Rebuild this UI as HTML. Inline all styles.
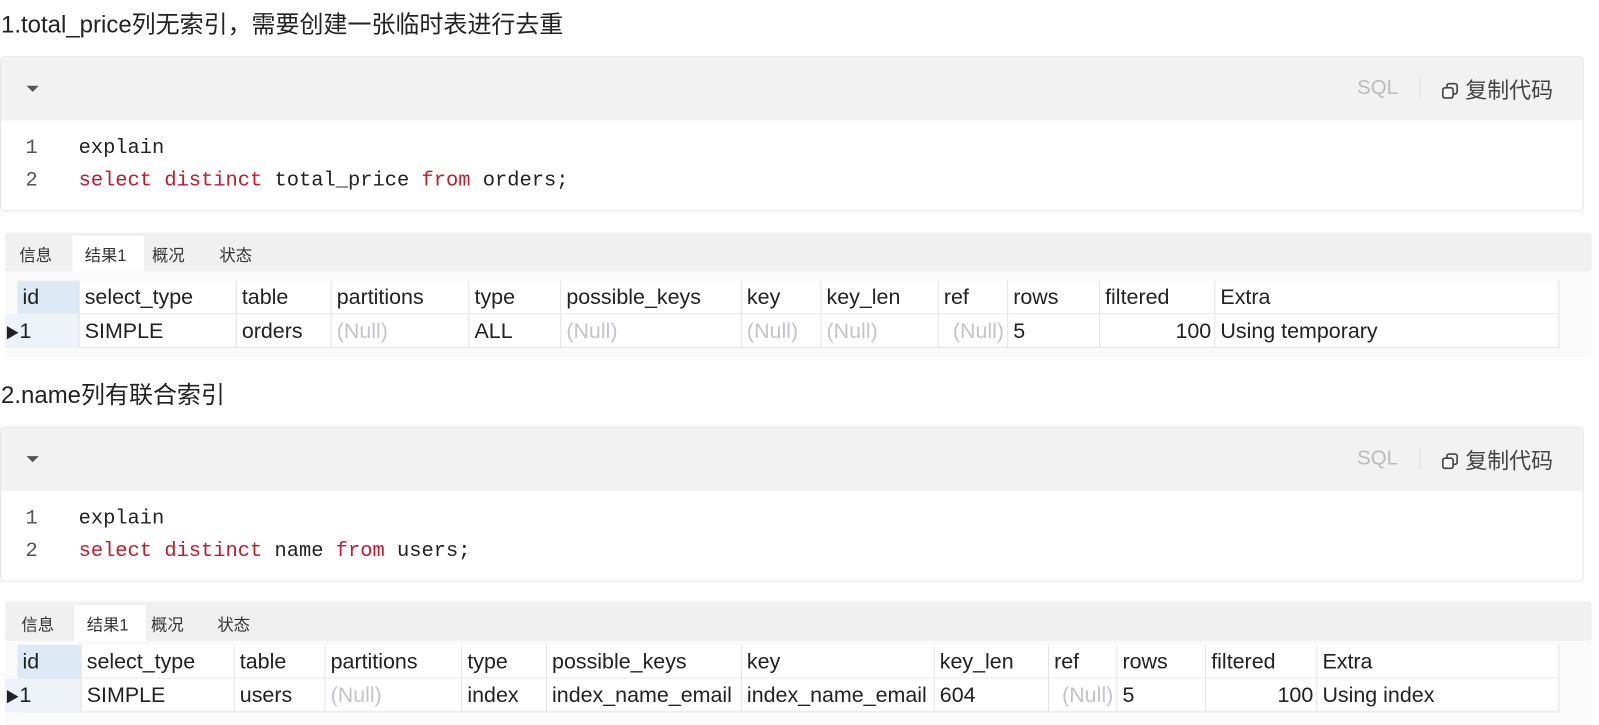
<!DOCTYPE html>
<html><head><meta charset="utf-8"><style>
*{margin:0;padding:0;box-sizing:border-box}
html{width:1599px;height:725px;overflow:hidden}
body{width:1599px;height:725px;background:#fff;position:relative;overflow:hidden;font-family:"Liberation Sans","Noto Sans CJK SC",sans-serif;color:#222}
#w{position:absolute;left:0;top:0;width:1567px;height:711px;transform:scale(1.0204);transform-origin:0 0}
.a{position:absolute}
.h{font-size:23.5px;color:#222;white-space:nowrap}
.cb{position:absolute;left:0;width:1552px;height:152px;border:1px solid #e6e6e6;border-radius:4px;background:#fff;overflow:hidden}
.cbh{height:62px;background:#f2f2f2;position:relative}
.tri{position:absolute;left:25px;top:28px;width:0;height:0;border-left:6px solid transparent;border-right:6px solid transparent;border-top:6px solid #555}
.sql{position:absolute;left:1329px;top:19px;font-size:20px;color:#bbb}
.sep{position:absolute;left:1390px;top:20px;width:1px;height:22px;background:#e0e0e0}
.cp{position:absolute;left:1411px;top:16px;font-size:21.5px;color:#444;white-space:nowrap}
.code{font-family:"Liberation Mono",monospace;font-size:20px;line-height:32px;position:absolute;left:24px;top:74px;white-space:pre;color:#222}
.code .n{color:#555;display:inline-block;width:52px}
.k{color:#c41a2a}
.res{position:absolute;left:5px;width:1555px;height:122px;background:#fafafa;overflow:hidden}
.tabs{position:absolute;left:0;top:0;width:1555px;height:38px;background:#f0f0f0;border-radius:3px}
.tab{position:absolute;top:9px;font-size:16px;color:#333}
.tabon{position:absolute;top:3px;height:35px;background:#fff}
.row{position:absolute;left:17px;height:33px;width:1511px;background:#fff;border-bottom:1px solid #e6e6e6}
.c{position:absolute;top:0;height:33px;line-height:33px;font-size:21px;padding-left:5px;border-right:1px solid #e3e3e3;white-space:nowrap;color:#222;overflow:hidden}
.nl{color:#c3c3cc}
</style></head><body><div id="w">

<div class="a h" style="left:1px;top:5px">1.total_price列无索引，需要创建一张临时表进行去重</div>
<div class="cb" style="top:55px">
 <div class="cbh"><div class="tri"></div><div class="sql">SQL</div><div class="sep"></div>
 <div class="cp"><svg width="18" height="18" viewBox="0 0 18 18" style="vertical-align:-2px;margin-right:6px"><rect x="6" y="2" width="10" height="10" rx="2" fill="none" stroke="#444" stroke-width="1.6"/><rect x="2" y="6" width="10" height="10" rx="2" fill="#fff" stroke="#444" stroke-width="1.6"/></svg>复制代码</div></div>
 <div class="code" style="top:74px"><span class="n">1</span>explain
<span class="n">2</span><span class="k">select</span> <span class="k">distinct</span> total_price <span class="k">from</span> orders;</div>
</div>

<div class="res" style="top:228px">
 <div class="tabs"><div class="tabon" style="left:66px;width:70px"></div>
 <div class="tab" style="left:14px">信息</div><div class="tab" style="left:78px">结果1</div><div class="tab" style="left:144px">概况</div><div class="tab" style="left:210px">状态</div></div>
</div>
<div class="row" style="top:275px">
 <div class="c" style="left:0;width:61px;background:#dde9f5">id</div>
 <div class="c" style="left:61px;width:154px">select_type</div>
 <div class="c" style="left:215px;width:93px">table</div>
 <div class="c" style="left:308px;width:135px">partitions</div>
 <div class="c" style="left:443px;width:90px">type</div>
 <div class="c" style="left:533px;width:177px">possible_keys</div>
 <div class="c" style="left:710px;width:78px">key</div>
 <div class="c" style="left:788px;width:115px">key_len</div>
 <div class="c" style="left:903px;width:68px">ref</div>
 <div class="c" style="left:971px;width:90px">rows</div>
 <div class="c" style="left:1061px;width:113px">filtered</div>
 <div class="c" style="left:1174px;width:337px">Extra</div>
</div>
<div class="row" style="top:308px">
 <div class="c" style="left:-12px;width:73px;background:#eef3f9;padding-left:0"><span style="font-size:14px">▶</span>1</div>
 <div class="c" style="left:61px;width:154px">SIMPLE</div>
 <div class="c" style="left:215px;width:93px">orders</div>
 <div class="c nl" style="left:308px;width:135px">(Null)</div>
 <div class="c" style="left:443px;width:90px">ALL</div>
 <div class="c nl" style="left:533px;width:177px">(Null)</div>
 <div class="c nl" style="left:710px;width:78px">(Null)</div>
 <div class="c nl" style="left:788px;width:115px">(Null)</div>
 <div class="c nl" style="left:903px;width:68px;text-align:right;padding-right:3px">(Null)</div>
 <div class="c" style="left:971px;width:90px">5</div>
 <div class="c" style="left:1061px;width:113px;text-align:right;padding-right:3px">100</div>
 <div class="c" style="left:1174px;width:337px">Using temporary</div>
</div>

<div class="a h" style="left:1px;top:368px">2.name列有联合索引</div>
<div class="cb" style="top:418px">
 <div class="cbh"><div class="tri"></div><div class="sql">SQL</div><div class="sep"></div>
 <div class="cp"><svg width="18" height="18" viewBox="0 0 18 18" style="vertical-align:-2px;margin-right:6px"><rect x="6" y="2" width="10" height="10" rx="2" fill="none" stroke="#444" stroke-width="1.6"/><rect x="2" y="6" width="10" height="10" rx="2" fill="#fff" stroke="#444" stroke-width="1.6"/></svg>复制代码</div></div>
 <div class="code"><span class="n">1</span>explain
<span class="n">2</span><span class="k">select</span> <span class="k">distinct</span> name <span class="k">from</span> users;</div>
</div>

<div class="res" style="top:588px">
 <div class="tabs" style="top:2px"><div class="tabon" style="left:68px;width:70px"></div>
 <div class="tab" style="left:16px">信息</div><div class="tab" style="left:80px">结果1</div><div class="tab" style="left:143px">概况</div><div class="tab" style="left:208px">状态</div></div>
</div>
<div class="row" style="top:632px">
 <div class="c" style="left:0;width:63px;background:#dde9f5">id</div>
 <div class="c" style="left:63px;width:150px">select_type</div>
 <div class="c" style="left:213px;width:89px">table</div>
 <div class="c" style="left:302px;width:134px">partitions</div>
 <div class="c" style="left:436px;width:83px">type</div>
 <div class="c" style="left:519px;width:191px">possible_keys</div>
 <div class="c" style="left:710px;width:189px">key</div>
 <div class="c" style="left:899px;width:112px">key_len</div>
 <div class="c" style="left:1011px;width:67px">ref</div>
 <div class="c" style="left:1078px;width:87px">rows</div>
 <div class="c" style="left:1165px;width:109px">filtered</div>
 <div class="c" style="left:1274px;width:237px">Extra</div>
</div>
<div class="row" style="top:665px">
 <div class="c" style="left:-12px;width:75px;background:#eef3f9;padding-left:0"><span style="font-size:14px">▶</span>1</div>
 <div class="c" style="left:63px;width:150px">SIMPLE</div>
 <div class="c" style="left:213px;width:89px">users</div>
 <div class="c nl" style="left:302px;width:134px">(Null)</div>
 <div class="c" style="left:436px;width:83px">index</div>
 <div class="c" style="left:519px;width:191px">index_name_email</div>
 <div class="c" style="left:710px;width:189px">index_name_email</div>
 <div class="c" style="left:899px;width:112px">604</div>
 <div class="c nl" style="left:1011px;width:67px;text-align:right;padding-right:3px">(Null)</div>
 <div class="c" style="left:1078px;width:87px">5</div>
 <div class="c" style="left:1165px;width:109px;text-align:right;padding-right:3px">100</div>
 <div class="c" style="left:1274px;width:237px">Using index</div>
</div>
</div></body></html>
